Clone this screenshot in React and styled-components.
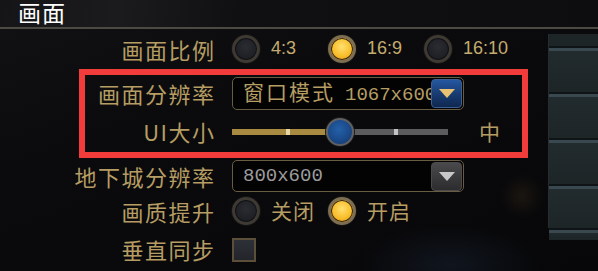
import React from 'react';
import styled, { createGlobalStyle } from 'styled-components';

const GlobalStyle = createGlobalStyle`
  html, body {
    margin: 0;
    padding: 0;
    background: #08080a;
  }
  body {
    font-family: "Noto Sans CJK SC", "Noto Sans", sans-serif;
  }
`;

const GOLD = '#b69d63';

const Page = styled.div`
  width: 598px;
  height: 271px;
  overflow: hidden;
  background:
    radial-gradient(ellipse 90px 40px at 450px 265px, rgba(40, 60, 90, 0.25), transparent),
    radial-gradient(circle 22px at 522px 196px, rgba(60, 45, 25, 0.35), transparent),
    linear-gradient(160deg, #121214 0%, #0b0b0d 35%, #070709 100%);
`;

const Header = styled.div`
  height: 27px;
  border-bottom: 2px solid #4d4943;
  padding-left: 18px;
  display: flex;
  align-items: flex-start;
  box-sizing: border-box;
  height: 29px;
  background: linear-gradient(100deg, #151517 0%, #1b1b1e 20%, #101012 40%, #0d0d0f 100%);
`;

const Title = styled.div`
  color: #ffffff;
  font-size: 23px;
  line-height: 25px;
  letter-spacing: 1px;
`;

const Body = styled.div`
  display: flex;
`;

const Form = styled.div`
  width: 548px;
  flex: none;
`;

const Row = styled.div`
  height: ${p => p.$h}px;
  display: grid;
  grid-template-columns: ${p => p.$label || 214}px auto;
  column-gap: 18px;
  align-items: center;
`;

const Label = styled.div`
  display: flex;
  justify-content: flex-end;
  white-space: nowrap;
  color: ${GOLD};
  font-size: 22px;
  letter-spacing: 1.5px;
  line-height: 1.2;
  margin-right: -1.5px;
`;

const Highlight = styled.div`
  margin-left: 79px;
  width: 437px;
  border: 6px solid #f23b3b;
`;

const Options = styled.div`
  display: flex;
  align-items: center;
`;

const Option = styled.div`
  width: 96px;
  display: flex;
  align-items: center;
  gap: 11px;
`;

const Radio = styled.div`
  width: 22px;
  height: 22px;
  border-radius: 50%;
  border: 3px solid ${p => (p.$on ? '#7d6e52' : '#3e3a33')};
  background: ${p =>
    p.$on
      ? 'radial-gradient(circle at 50% 40%, #ffe070 0%, #f8bd2a 55%, #d98e10 100%)'
      : 'radial-gradient(circle at 50% 40%, #2a2c32 0%, #1e1f24 70%, #17181c 100%)'};
  box-shadow: 0 0 0 1px #141414, inset 0 0 0 1px ${p => (p.$on ? '#3a2a10' : '#101114')};
`;

const OptionText = styled.span`
  color: ${p => (p.$num ? '#c4ab70' : GOLD)};
  font-family: ${p => (p.$num ? '"Liberation Sans", sans-serif' : '"Noto Sans CJK SC", sans-serif')};
  font-size: ${p => (p.$num ? 18 : 21)}px;
  letter-spacing: ${p => (p.$num ? 0 : 1)}px;
  line-height: 1.2;
`;

const Select = styled.div`
  width: 219px;
  height: ${p => p.$h}px;
  border: 1px solid #6a5c42;
  border-radius: 5px;
  background: #030304;
  display: flex;
  align-items: center;
  padding-left: 10px;
  padding-right: 1px;
  overflow: hidden;
`;

const SelectText = styled.div`
  color: ${p => (p.$muted ? '#9c9c9c' : GOLD)};
  white-space: nowrap;
  overflow: hidden;
  flex: 1;
  min-width: 0;
  display: flex;
  align-items: baseline;
  gap: 10px;
  line-height: 1.3;
`;

const SelectCn = styled.span`
  font-size: 21px;
  letter-spacing: 2px;
`;

const SelectNum = styled.span`
  font-family: "Liberation Mono", monospace;
  font-size: 19px;
`;

const DropButton = styled.div`
  width: 29px;
  height: 27px;
  flex: none;
  border-radius: 4px;
  border: 1px solid ${p => (p.$blue ? '#3b5f92' : '#4a4a4c')};
  background: ${p =>
    p.$blue
      ? 'linear-gradient(180deg, #2557a0 0%, #173a6e 55%, #0f2850 100%)'
      : 'linear-gradient(180deg, #4a4a4c 0%, #38383a 60%, #2c2c2e 100%)'};
  display: flex;
  align-items: center;
  justify-content: center;
`;

const Arrow = ({ color }) => (
  <svg width="16" height="9" viewBox="0 0 16 9">
    <path d="M0 0 H16 L8 9 Z" fill={color} />
  </svg>
);

const SliderRow = styled.div`
  display: flex;
  align-items: center;
  gap: 31px;
`;

const Track = styled.div`
  position: relative;
  width: 216px;
  height: 6px;
  background: linear-gradient(90deg, #a88a40 0%, #a88a40 50%, #5c5c5e 50%, #5c5c5e 100%);
`;

const Tick = styled.div`
  position: absolute;
  top: 0;
  width: 4px;
  height: 6px;
  background: ${p => p.$c};
`;

const Thumb = styled.div`
  position: absolute;
  top: 50%;
  width: 24px;
  height: 24px;
  margin-left: -14px;
  margin-top: -14px;
  border-radius: 50%;
  border: 2px solid #5f6062;
  background: radial-gradient(circle at 45% 40%, #2460a8 0%, #1a4a8a 55%, #123464 100%);
  box-shadow: 0 0 0 1px #1a1a1a;
`;

const SizeText = styled.span`
  color: ${GOLD};
  font-size: 21px;
  line-height: 1.2;
`;

const Checkbox = styled.div`
  width: 20px;
  height: 20px;
  border: 2px solid #5b4f3a;
  background: linear-gradient(180deg, #2e3038 0%, #24252b 100%);
`;

const SidePanel = styled.div`
  flex: 1;
  margin-top: 5px;
  height: 194px;
  background: #1d2527;
  display: flex;
  flex-direction: column;
  padding-top: 12px;
  box-sizing: border-box;
  border-left: 1px solid #252d30;
`;

const Slat = styled.div`
  height: ${p => p.$h}px;
  flex: none;
  border-top: 2px solid #0f1517;
  box-shadow: inset 0 3px 0 #3a4850;
  background: linear-gradient(180deg, #222b2e 0%, #1d2527 100%);
`;

const RadioGroup = ({ items, active }) => (
  <Options>
    {items.map((t, i) => (
      <Option key={t}>
        <Radio $on={i === active} />
        <OptionText $num={/\d/.test(t)}>{t}</OptionText>
      </Option>
    ))}
  </Options>
);

export default function App() {
  return (
    <>
      <GlobalStyle />
      <Page>
        <Header>
          <Title>画面</Title>
        </Header>
        <Body>
          <Form>
            <Row $h={40}>
              <Label>画面比例</Label>
              <RadioGroup items={['4:3', '16:9', '16:10']} active={1} />
            </Row>
            <Highlight>
              <Row $h={36} $label={129}>
                <Label>画面分辨率</Label>
                <Select $h={31}>
                  <SelectText>
                    <SelectCn>窗口模式</SelectCn>
                    <SelectNum>1067x600</SelectNum>
                  </SelectText>
                  <DropButton $blue>
                    <Arrow color="#e8c272" />
                  </DropButton>
                </Select>
              </Row>
              <Row $h={41} $label={129}>
                <Label>UI大小</Label>
                <SliderRow>
                  <Track>
                    <Tick $c="#e6d6a8" style={{ left: 54 }} />
                    <Tick $c="#c4c4c4" style={{ left: 162 }} />
                    <Thumb style={{ left: 108 }} />
                  </Track>
                  <SizeText>中</SizeText>
                </SliderRow>
              </Row>
            </Highlight>
            <Row $h={36}>
              <Label>地下城分辨率</Label>
              <Select $h={30}>
                <SelectText $muted>
                  <SelectNum>800x600</SelectNum>
                </SelectText>
                <DropButton>
                  <Arrow color="#c8c8c8" />
                </DropButton>
              </Select>
            </Row>
            <Row $h={34}>
              <Label>画质提升</Label>
              <RadioGroup items={['关闭', '开启']} active={1} />
            </Row>
            <Row $h={43}>
              <Label>垂直同步</Label>
              <Checkbox />
            </Row>
          </Form>
          <SidePanel>
            <Slat $h={44} />
            <Slat $h={44} />
            <Slat $h={44} />
            <Slat $h={42} />
            <Slat $h={10} />
          </SidePanel>
        </Body>
      </Page>
    </>
  );
}
